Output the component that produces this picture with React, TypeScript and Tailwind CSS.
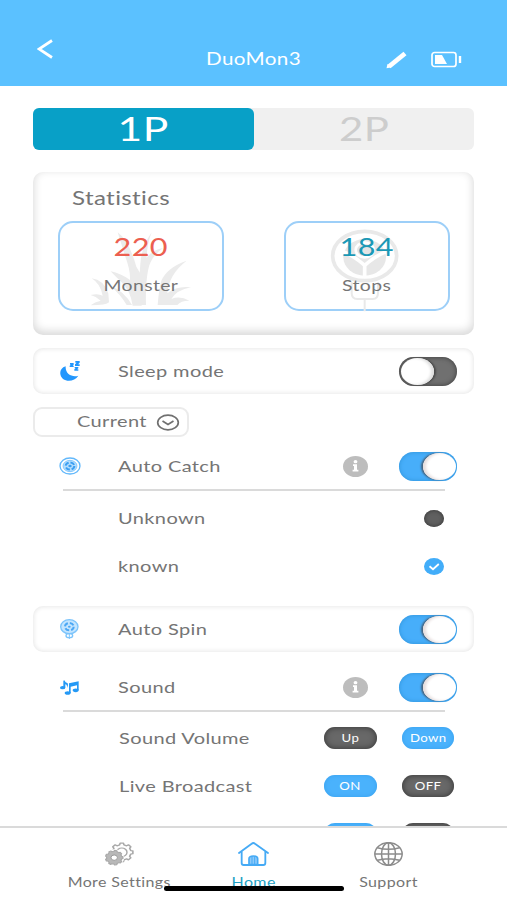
import type { ReactNode } from 'react'

function gearPath(cx: number, cy: number, outer: number, inner: number, teeth: number) {
  const points: string[] = []
  const step = (Math.PI * 2) / teeth
  for (let i = 0; i < teeth; i++) {
    const a = i * step
    const corners = [
      [inner, -0.3],
      [outer, -0.19],
      [outer, 0.19],
      [inner, 0.3],
    ]
    corners.forEach(([r, o]) => {
      points.push(`${(cx + r * Math.cos(a + o * step)).toFixed(2)} ${(cy + r * Math.sin(a + o * step)).toFixed(2)}`)
    })
  }
  return `M${points.join('L')}Z`
}

function GearsIcon() {
  return (
    <svg className="h-6 w-[29px]" viewBox="0 0 87 72" fill="none" stroke="#a8a8a8" strokeLinejoin="round">
      <g transform="scale(1.2 1)">
        <path d={gearPath(42, 31, 28, 23, 8)} strokeWidth="4" />
        <circle cx="42" cy="31" r="13" strokeWidth="3.5" />
        <circle cx="23" cy="47" r="25" fill="#fff" stroke="none" />
        <path d={gearPath(23, 47, 22, 19, 9)} fill="#b8b8b8" strokeWidth="3" />
        <circle cx="23" cy="47" r="8" fill="#fff" stroke="#959595" strokeWidth="2.5" />
      </g>
    </svg>
  )
}

function HomeIcon() {
  return (
    <svg className="h-6 w-[31px]" viewBox="0 0 93 72" fill="none" stroke="#45aaf5" strokeWidth="5.5" strokeLinecap="round" strokeLinejoin="round">
      <path d="M3 33 41 5Q46 1 51 5L90 33" />
      <path d="M11 30V63Q11 69 17 69H76Q82 69 82 63V30" />
      <path d="M33 68V50Q33 42 46 42T59 50V68Z" fill="#8cc9fa" strokeWidth="5" />
      <path d="M42 45V67M50 45V67" strokeWidth="3" />
    </svg>
  )
}

function GlobeIcon() {
  return (
    <svg className="h-6 w-[29px]" viewBox="0 0 87 72" fill="none" stroke="#8c8c8c" strokeWidth="4.5">
      <ellipse cx="43.5" cy="36" rx="41" ry="34" />
      <ellipse cx="43.5" cy="36" rx="21" ry="34" />
      <path d="M43.5 2V70M2 36H85M10 17Q43 27 77 17M10 55Q43 45 77 55" />
    </svg>
  )
}

function GrassIcon() {
  return (
    <svg className="absolute left-[29px] top-[6px] h-[79px] w-[103px]" viewBox="205 205 309 237" fill="#ebebeb">
      <path d="M291 215Q325 240 347 318L363 345V435H336Q330 390 300 362Q278 341 270 332Q300 338 328 358Q330 330 313 285Z" />
      <path d="M393 215Q362 260 359 310L350 433H376Q374 370 382 330Q388 290 427 262Q390 270 378 292Q379 250 393 215Z" />
      <path d="M498 300Q440 320 422 360Q414 390 411 433H470Q480 420 506 420Q478 404 452 415Q468 388 511 380Q470 374 440 398Q445 340 498 300Z" />
      <path d="M213 353Q250 358 263 398L265 425Q258 434 210 434Q222 424 240 420Q225 406 210 403Q232 397 246 405Q240 370 213 353Z" />
      <path d="M268 375Q310 390 334 433H318Q298 399 268 375Z" />
    </svg>
  )
}

function StopBackdrop() {
  return (
    <svg className="absolute left-[44px] top-[6px] h-[83px] w-[70px]" viewBox="208 205 210 249" fill="none" stroke="#e9e9e9">
      <ellipse cx="312" cy="286" rx="96" ry="74" strokeWidth="11" />
      <ellipse cx="312" cy="290" rx="64" ry="55" fill="#e7e7e7" stroke="none" />
      <path d="M312 347V314M240 270Q276 282 312 314Q348 282 384 270" stroke="#fff" strokeWidth="11" />
      <ellipse cx="312" cy="268" rx="27" ry="22" fill="#e4e4e4" stroke="#fff" strokeWidth="8" />
      <path d="M273 365V397Q273 415 290 415H336Q352 415 352 397V365M312 415V452" strokeWidth="6" />
    </svg>
  )
}

function TargetIcon() {
  return (
    <svg className="h-[18px] w-[22px]" viewBox="0 0 66 54" fill="none" stroke="#62b8fb">
      <ellipse cx="33" cy="27" rx="30" ry="24" strokeWidth="4" />
      <ellipse cx="33" cy="27" rx="21" ry="17" fill="#b5defd" strokeWidth="2" />
      <ellipse cx="33" cy="27" rx="13" ry="10.5" stroke="#3b9ff2" strokeWidth="6" strokeDasharray="13 5.5" />
      <ellipse cx="33" cy="27" rx="5" ry="4" fill="#3b9ff2" stroke="none" />
    </svg>
  )
}

function SpinIcon() {
  return (
    <svg className="h-5 w-[19px]" viewBox="0 0 57 60" fill="none" stroke="#7cc4fb">
      <ellipse cx="28" cy="23" rx="26" ry="21" strokeWidth="4" fill="#c4e5fe" />
      <ellipse cx="28" cy="23" rx="13" ry="11" stroke="#4aa7f5" strokeWidth="6" strokeDasharray="13 5.9" />
      <ellipse cx="28" cy="23" rx="4" ry="3" fill="#4aa7f5" stroke="none" />
      <ellipse cx="28" cy="50" rx="10" ry="6" strokeWidth="4" />
      <path d="M28 44V60" strokeWidth="3" />
    </svg>
  )
}

function MoonIcon() {
  return (
    <svg className="h-5 w-5" viewBox="0 0 60 60" fill="#2196fd">
      <path d="M17 16C-2 21-4 43 9 54C23 64 45 60 55 44C38 50 15 40 17 16Z" />
      <path d="M30 6H41V11L38 14H41V18H29V14L33 11H30ZM46 0H59V5L54 10H59V15H45V10L50 5H46ZM44 18H55V22L51 25H55V29H43V25L47 22H44Z" />
    </svg>
  )
}

function MusicIcon() {
  return (
    <svg className="h-[15px] w-[19px]" viewBox="0 0 57 45" fill="#2599f5">
      <ellipse cx="8" cy="23" rx="8" ry="5" />
      <path d="M13 1Q16 8 23 10Q27 16 21 24Q22 14 16 13V23H10V2Z" />
      <path d="M27 10 56 4V31H51V16L32 20V39H27Z" />
      <ellipse cx="23" cy="39" rx="9" ry="5.5" />
      <ellipse cx="47" cy="31" rx="9" ry="5.5" />
    </svg>
  )
}

// Wide lettering used through the whole app
function Label({ children, className = '' }: { children: ReactNode; className?: string }) {
  return <span className={`inline-block origin-left scale-x-[1.25] whitespace-nowrap ${className}`}>{children}</span>
}

function Toggle({ on }: { on?: boolean }) {
  if (on) {
    return (
      <div className="flex h-[29px] w-[58px] justify-end rounded-full bg-[#47aefa] p-px shadow-[inset_0_0_4px_#2f92d8]">
        <div className="h-[27px] w-[33px] rounded-[50%] bg-white shadow-[-2px_0_2px_#46627c,inset_3px_0_3px_#e6dede]" />
      </div>
    )
  }
  return (
    <div className="flex h-[29px] w-[58px] rounded-full bg-[#707070] p-px shadow-[inset_0_0_5px_#3a3a3a]">
      <div className="ml-px h-[27px] w-[33px] rounded-[50%] bg-white shadow-[2px_0_2px_#4a4a4a,inset_-3px_0_3px_#dedede]" />
    </div>
  )
}

function InfoBadge() {
  return (
    <div className="flex h-[21px] w-[25px] items-center justify-center rounded-[50%] bg-[#bdbdbd]">
      <svg className="h-3 w-[7px]" viewBox="0 0 7 12" fill="#fff">
        <ellipse cx="3.5" cy="1.7" rx="1.9" ry="1.6" />
        <path d="M1 4.3H5V9.7H6.4V11.6H.6V9.7H2V6H1Z" />
      </svg>
    </div>
  )
}

function Pill({ children, active }: { children?: ReactNode; active?: boolean }) {
  return (
    <div
      className={`flex h-[22px] w-[52.5px] items-center justify-center rounded-full text-[11px] text-white ${
        active ? 'bg-[#4ab2fc] shadow-[inset_0_0_4px_#38a0ee]' : 'bg-[#686868] shadow-[inset_0_0_6px_#333]'
      }`}
    >
      <span className="inline-block scale-x-[1.2]">{children}</span>
    </div>
  )
}

function SettingRow({ icon, label, info, on, card }: { icon: ReactNode; label: string; info?: boolean; on?: boolean; card?: boolean }) {
  return (
    <div
      className={`flex h-[46px] shrink-0 items-center pr-[17px] ${
        card ? 'rounded-[10px] shadow-[inset_0_0_4px_1px_#e8e8e8]' : ''
      }`}
    >
      <div className="flex w-[73px] justify-center">{icon}</div>
      <Label className="ml-3 mb-px">{label}</Label>
      <div className="ml-auto flex items-center gap-[31px]">
        {info && <InfoBadge />}
        <Toggle on={on} />
      </div>
    </div>
  )
}

function OptionRow({ label, children }: { label?: string; children: ReactNode }) {
  return (
    <div className="flex h-12 shrink-0 items-center justify-between pl-[85px] pr-5">
      <Label className="mb-px">{label}</Label>
      <div className="flex items-center gap-[25px]">{children}</div>
    </div>
  )
}

function Divider() {
  return <div className="ml-[30px] mr-[29px] h-0.5 shrink-0 bg-[#dadada]" />
}

function StatBox({ value, label, color, children }: { value: number; label: string; color: string; children: ReactNode }) {
  return (
    <div className="relative h-[90px] w-[166px] rounded-[15px] border-2 border-[#9dcff8]">
      {children}
      <div className="relative flex flex-col items-center">
        <span className={`mt-2 scale-x-[1.25] text-[24.5px] leading-8 ${color}`}>{value}</span>
        <span className="mt-3 scale-x-[1.25] text-[15.5px] leading-5">{label}</span>
      </div>
    </div>
  )
}

const tabs = [
  { label: 'More Settings', icon: <GearsIcon /> },
  { label: 'Home', icon: <HomeIcon />, active: true },
  { label: 'Support', icon: <GlobeIcon /> },
]

export default function App() {
  return (
    <div className="relative flex h-[900px] w-[507px] flex-col overflow-hidden bg-white font-[Lato,sans-serif] text-[16px] tracking-[0.3px] text-[#757575]">
      <header className="flex h-[86px] shrink-0 items-start bg-[#5bc1ff] text-white">
        <svg className="ml-[37px] mt-[39px] h-5 w-4" viewBox="0 0 16 20" fill="none" stroke="#fff" strokeWidth="2.8">
          <path d="M15 1.5 2 10 15 18.5" />
        </svg>
        <h1 className="ml-[153px] mt-[47px] w-[96px] origin-left scale-x-[1.25] whitespace-nowrap text-[16.5px] leading-6">DuoMon3</h1>
        <svg className="ml-[84px] mt-[51px] h-[18px] w-[22px]" viewBox="0 0 22 18">
          <path d="M3 15.5 19 2.5" stroke="#fff" strokeWidth="4.8" />
          <path d="M.5 17.3 1.5 13 5 16.5Z" fill="#fff" />
        </svg>
        <svg className="ml-[23px] mt-[51px] h-[17px] w-[31px]" viewBox="0 0 31 17" fill="none" stroke="#fff">
          <rect x="1" y="1.5" width="24" height="14" rx="2.5" strokeWidth="1.7" />
          <path d="M4 4H11L16 13H4Z" fill="#fff" stroke="none" />
          <path d="M29 5V12" strokeWidth="2.4" />
        </svg>
      </header>

      <main className="flex min-h-0 flex-1 flex-col overflow-hidden px-[33px] pt-[22px]">
        <div className="flex h-[42px] shrink-0 rounded-md bg-[#f0f0f0] text-[33.5px] leading-none">
          <div className="flex w-1/2 items-center justify-center rounded-md bg-[#08a0c7] text-white">
            <span className="scale-x-[1.27]">1P</span>
          </div>
          <div className="flex w-1/2 items-center justify-center text-[#cdcdcd]">
            <span className="scale-x-[1.25]">2P</span>
          </div>
        </div>

        <section className="mt-[22px] h-[163px] shrink-0 rounded-[10px] pl-[25px] pr-6 pt-3 shadow-[inset_0_-3px_8px_1px_#dadada]">
          <h2 className="ml-[14px] h-[37px] text-[19.3px] leading-[27px]">
            <Label>Statistics</Label>
          </h2>
          <div className="flex justify-between">
            <StatBox value={220} label="Monster" color="text-[#ec5f50]">
              <GrassIcon />
            </StatBox>
            <StatBox value={184} label="Stops" color="text-[#1b98b5]">
              <StopBackdrop />
            </StatBox>
          </div>
        </section>

        <div className="mt-[13px]">
          <SettingRow icon={<MoonIcon />} label="Sleep mode" card />
        </div>

        <div className="mt-[13px] flex h-[30px] w-[156px] shrink-0 items-center rounded-[9px] border-2 border-[#ebebeb] pl-[42px] pr-[7px]">
          <Label className="mb-0.5">Current</Label>
          <svg className="ml-auto h-[17px] w-6" viewBox="0 0 24 17" fill="none" stroke="#707070" strokeWidth="1.7">
            <ellipse cx="12" cy="8.5" rx="10.3" ry="7.3" />
            <path d="M6.5 7 12 10.5 17.5 7" />
          </svg>
        </div>

        <div className="mt-1.5">
          <SettingRow icon={<TargetIcon />} label="Auto Catch" info on />
        </div>
        <Divider />
        <div className="mt-[3px] pr-[10px]">
          <OptionRow label="Unknown">
            <div className="h-[17px] w-5 rounded-[50%] bg-[#606060] shadow-[inset_0_0_4px_#333]" />
          </OptionRow>
          <OptionRow label="known">
            <svg className="h-[17px] w-5" viewBox="0 0 20 17" fill="none">
              <ellipse cx="10" cy="8.5" rx="10" ry="8.5" fill="#42adf9" />
              <path d="M5.5 8.2 9 11.2 14.8 6" stroke="#fff" strokeWidth="1.8" />
            </svg>
          </OptionRow>
        </div>

        <div className="mt-4">
          <SettingRow icon={<SpinIcon />} label="Auto Spin" on card />
        </div>

        <div className="mt-3">
          <SettingRow icon={<MusicIcon />} label="Sound" info on />
        </div>
        <Divider />
        <div className="ml-px mt-0.5">
          <OptionRow label="Sound Volume">
            <Pill>Up</Pill>
            <Pill active>Down</Pill>
          </OptionRow>
          <OptionRow label="Live Broadcast">
            <Pill active>ON</Pill>
            <Pill>OFF</Pill>
          </OptionRow>
          <OptionRow>
            <Pill active />
            <Pill />
          </OptionRow>
        </div>
      </main>

      <nav className="flex h-[74px] shrink-0 border-t-2 border-[#dadada] bg-white pl-[52px] text-[12.8px]">
        {tabs.map(tab => (
          <div key={tab.label} className="flex w-[134.5px] flex-col items-center pt-[14px]">
            {tab.icon}
            <span className={`mt-1.5 scale-x-[1.25] whitespace-nowrap leading-5 ${tab.active ? 'text-[#1d9fc4]' : ''}`}>{tab.label}</span>
          </div>
        ))}
      </nav>
      <div className="absolute left-[164px] top-[886px] h-[5px] w-[180px] rounded-full bg-black" />
    </div>
  )
}
